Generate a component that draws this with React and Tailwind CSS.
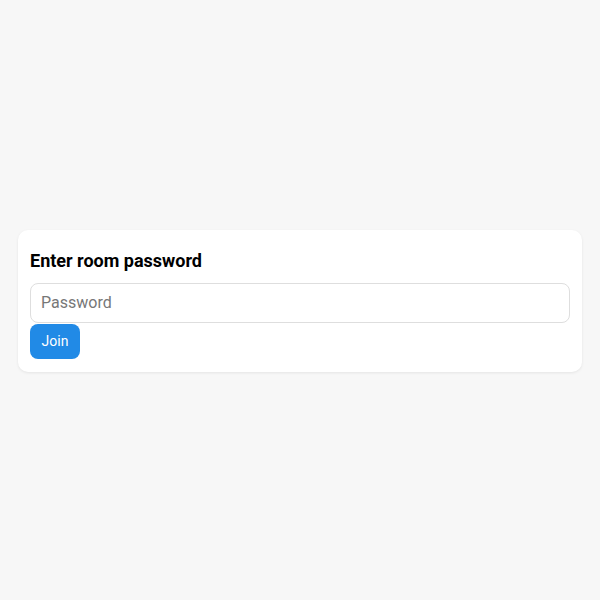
export default function App() {
  return (
    <div className="w-[600px] h-[600px] bg-[#f7f7f7] flex items-center px-[18px]" style={{ fontFamily: 'Roboto, "Noto Sans", sans-serif' }}>
      <div className="w-full bg-white rounded-[10px] shadow-[0_1px_3px_rgba(0,0,0,0.08)] px-3 pt-[17px] pb-[13px] mt-[1px]">
        <h3 className="text-[18px] leading-[28px] font-bold text-black mb-[8px]">Enter room password</h3>
        <input
          type="password"
          placeholder="Password"
          className="block w-full h-[40px] rounded-[8px] border border-[#dedede] px-[10px] text-[16px] placeholder:text-[#777] outline-none"
        />
        <button className="mt-px h-[35px] w-[50px] rounded-[8px] bg-[#218ae6] text-white text-[14px]">Join</button>
      </div>
    </div>
  );
}
